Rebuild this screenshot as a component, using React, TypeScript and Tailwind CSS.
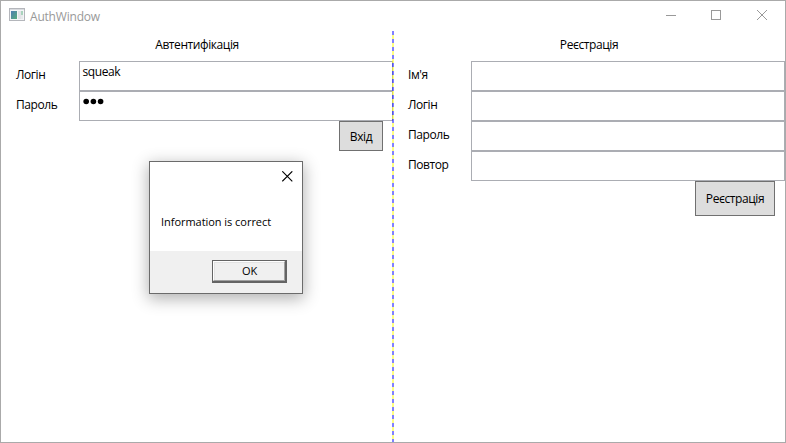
import React from 'react';

type TextProps = { children: React.ReactNode; className?: string };

function Text({ children, className = '' }: TextProps) {
  return <span className={`block whitespace-nowrap ${className}`}>{children}</span>;
}

type FieldProps = { label: string; children?: React.ReactNode };

function Field({ label, children }: FieldProps) {
  return (
    <div className="flex h-[30px]">
      <div className="w-[78px] shrink-0 pl-[15px] leading-[28px]">
        <Text>{label}</Text>
      </div>
      <div className="h-[30px] w-[314px] shrink-0 border border-[#abadb3] bg-white pl-[2.5px] leading-[19px]">
        {children}
      </div>
    </div>
  );
}

function AppIcon() {
  return (
    <svg width="16" height="14" viewBox="0 0 16 14">
      <defs>
        <linearGradient id="pane" x1="0" y1="0" x2="1" y2="1">
          <stop offset="0" stopColor="#4f7db3" />
          <stop offset="1" stopColor="#58ad7c" />
        </linearGradient>
      </defs>
      <rect x="0.5" y="0.5" width="15" height="12" fill="#f4f5f7" stroke="#b4b6bb" />
      <rect x="1" y="1" width="14" height="1" fill="#d9dbdf" />
      <rect x="2" y="3" width="6" height="8" fill="url(#pane)" />
      <rect x="9" y="3" width="3" height="8" fill="#e2e3e7" />
      <rect x="12" y="3" width="2" height="4" fill="#a9d3bd" />
      <rect x="12" y="7" width="2" height="4" fill="#e8eaec" />
    </svg>
  );
}

function TitleBar() {
  return (
    <header className="flex h-[30px] items-start pl-2 text-[#999999]">
      <div className="pt-[7px]">
        <AppIcon />
      </div>
      <Text className="ml-[5px] pt-[6px] leading-[19px] tracking-[-0.2px]">AuthWindow</Text>
      <svg className="mt-[9px] mr-[17px] ml-auto" width="102" height="11" viewBox="0 0 102 11" stroke="#999999" fill="none">
        <path d="M0 5.5H10" />
        <rect x="45.5" y="0.5" width="9" height="9" />
        <path d="M91 0L101 10M101 0L91 10" />
      </svg>
    </header>
  );
}

function MessageBox() {
  return (
    <div className="absolute top-[160px] left-[148px] flex h-[133px] w-[154px] flex-col border border-[#6b6b6b] bg-white shadow-[0_4px_15px_1px_rgba(0,0,0,0.3)]">
      <div className="flex h-[89px] flex-col">
        <svg className="mt-[9px] mr-[9px] self-end" width="11" height="11" viewBox="0 0 11 11" stroke="#000" strokeWidth="1.1">
          <path d="M0.3 0.3L10.3 10.3M10.3 0.3L0.3 10.3" />
        </svg>
        <Text className="mt-[31px] pl-[11px] text-[11px] leading-[18px] tracking-[-0.04px]">Information is correct</Text>
      </div>
      <div className="flex flex-1 justify-end bg-[#f0f0f0] pt-[9px] pr-[15px]">
        <button className="h-[23px] w-[75px] border-t border-r-2 border-b-2 border-l border-[#646464] bg-[#f0f0f0]">
          <span className="flex h-full items-center justify-center border-t border-r border-b border-l border-t-white border-r-[#a0a0a0] border-b-[#a0a0a0] border-l-white pb-px pl-px text-[11px] leading-none tracking-[-0.2px] shadow-[inset_1px_1px_0_#e3e3e3]">
            OK
          </span>
        </button>
      </div>
    </div>
  );
}

export default function App() {
  return (
    <div className="relative flex h-[443px] w-[786px] flex-col overflow-hidden border border-[#aaaaaa] bg-white font-['Open_Sans','Noto_Sans',sans-serif] text-[12px] text-black">
      <TitleBar />
      <main className="flex flex-1 tracking-[-0.42px]">
        <section className="relative w-[392px]">
          <Text className="h-[30px] text-center leading-[28px]">Автентифікація</Text>
          <Field label="Логін">
            <Text>squeak</Text>
          </Field>
          <Field label="Пароль">
            <svg className="mt-[6px]" width="22" height="7" viewBox="0 0 22 7">
              <circle cx="3.2" cy="3.5" r="2.8" />
              <circle cx="10.4" cy="3.5" r="2.8" />
              <circle cx="17.6" cy="3.5" r="2.8" />
            </svg>
          </Field>
          <div className="flex justify-end pr-[10px]">
            <button className="h-[30px] w-[44px] border border-[#707070] bg-[#dddddd] pt-px">Вхід</button>
          </div>
          <div className="absolute top-0 -right-px h-full w-[2px] bg-[repeating-linear-gradient(to_bottom,#0000ff_0_4px,#ffff00_4px_8px)] opacity-50" />
        </section>
        <section className="w-[392px]">
          <Text className="h-[30px] text-center leading-[28px]">Реєстрація</Text>
          <Field label="Ім'я" />
          <Field label="Логін" />
          <Field label="Пароль" />
          <Field label="Повтор" />
          <div className="flex justify-end pr-[10px]">
            <button className="h-[35px] w-[80px] border border-[#707070] bg-[#dddddd]">Реєстрація</button>
          </div>
        </section>
      </main>
      <MessageBox />
    </div>
  );
}
